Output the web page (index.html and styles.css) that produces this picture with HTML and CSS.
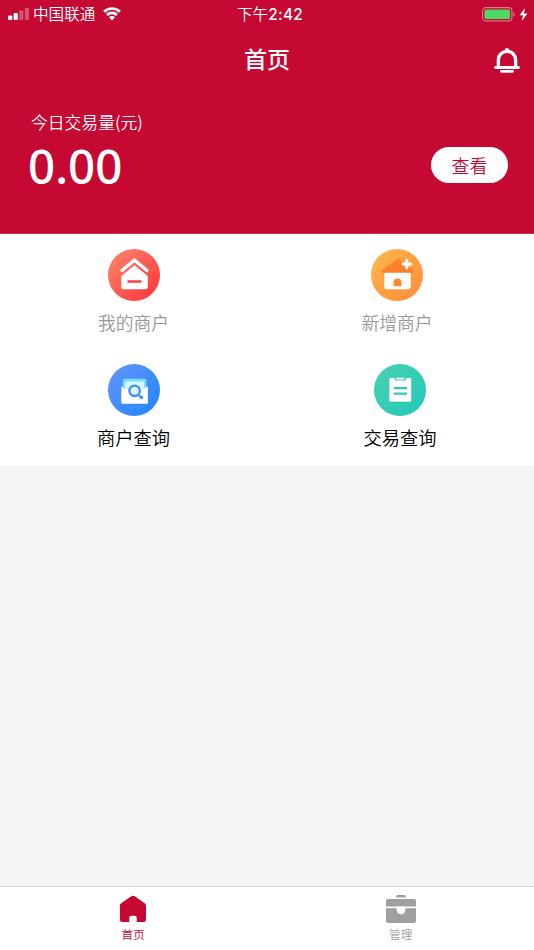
FILE: index.html
```html
<!DOCTYPE html>
<html lang="zh-CN">
<head>
    <meta charset="UTF-8">
    <meta name="viewport" content="width=device-width, initial-scale=1.0">
    <title>首页</title>
    <link rel="stylesheet" href="styles.css">
</head>
<body>

<div class="page">
    <header class="header">
        <div class="status-bar">
            <div class="status-left">
                <svg class="signal" width="21" height="12" viewBox="0 0 21 12" fill="#fff">
                    <rect x="0" y="7.5" width="4.2" height="4.5" rx="1"/>
                    <rect x="5.6" y="5" width="4.2" height="7" rx="1"/>
                    <rect x="11.2" y="2.5" width="4.2" height="9.5" rx="1" opacity=".3"/>
                    <rect x="16.8" y="0" width="4.2" height="12" rx="1" opacity=".3"/>
                </svg>
                <span class="carrier">中国联通</span>
                <svg class="wifi" width="18" height="14" viewBox="0 0 18 14">
                    <path d="M1.1 4.7a11.3 11.3 0 0 1 15.8 0M4 8a7.1 7.1 0 0 1 10 0" fill="none" stroke="#fff" stroke-width="2.7"/>
                    <path d="M9 13.5L5.9 10.3a4.4 4.4 0 0 1 6.2 0z" fill="#fff"/>
                </svg>
            </div>
            <div class="status-time">下午<span class="clock">2:42</span></div>
            <div class="status-right">
                <svg width="34" height="15" viewBox="0 0 34 15">
                    <rect x=".6" y=".6" width="29.3" height="13.3" rx="3.4" fill="none" stroke="#fff" stroke-opacity=".45" stroke-width="1.1"/>
                    <rect x="2.5" y="2.4" width="25.5" height="9.7" rx="1.6" fill="#4cd964"/>
                    <path d="M31.4 4.9q2.6 2.3 0 4.8z" fill="#fff" opacity=".5"/>
                </svg>
                <svg class="bolt" width="9" height="13" viewBox="0 0 9 13">
                    <path d="M6 0L.5 7.3H4L2.8 13 8.5 5.4H5z" fill="#fff"/>
                </svg>
            </div>
        </div>

        <div class="nav-bar">
            <h1 class="nav-title">首页</h1>
            <svg class="bell" width="26" height="26" viewBox="0 0 26 26">
                <circle cx="13" cy="2.2" r="2.2" fill="#fff"/>
                <path d="M4.4 19.5V11.6a8.6 8.3 0 0 1 17.2 0v7.9" fill="none" stroke="#fff" stroke-width="3.3"/>
                <path d="M1.5 19.5h23M7.5 23.3h11" stroke="#fff" stroke-width="2.8" stroke-linecap="round"/>
            </svg>
        </div>

        <div class="summary">
            <div>
                <div class="summary-label">今日交易量(元)</div>
                <div class="summary-amount">0.00</div>
            </div>
            <button class="view-btn">查看</button>
        </div>
    </header>

    <main class="menu">
        <div class="menu-item muted">
            <svg width="52" height="52" viewBox="0 0 52 52">
                <defs>
                    <linearGradient id="red" x1="0" y1="0" x2="1" y2="1">
                        <stop offset="0" stop-color="#ff8a6c"/>
                        <stop offset="1" stop-color="#fd3038"/>
                    </linearGradient>
                </defs>
                <circle cx="26" cy="26" r="26" fill="url(#red)"/>
                <path d="M26.5 16.2L39.8 27v10.8q0 2.5-2.5 2.5H15.8q-2.5 0-2.5-2.5V27z" fill="#fff"/>
                <path d="M13 22.2L26.5 11.3 40 22.2" fill="none" stroke="#fff" stroke-width="3.4"/>
                <path d="M19.5 32.5h14" stroke="#f6474b" stroke-width="2.6"/>
            </svg>
            <span>我的商户</span>
        </div>
        <div class="menu-item muted shifted">
            <svg width="52" height="52" viewBox="0 0 52 52">
                <defs>
                    <linearGradient id="orange" x1="0" y1="0" x2="1" y2="1">
                        <stop offset="0" stop-color="#ffb84d"/>
                        <stop offset="1" stop-color="#ff8b36"/>
                    </linearGradient>
                </defs>
                <circle cx="26" cy="26" r="26" fill="url(#orange)"/>
                <path d="M13.3 22h26.4v15.8q0 2.5-2.5 2.5H15.8q-2.5 0-2.5-2.5z" fill="#fff"/>
                <path d="M26.3 10.3q1-.6 2 .2L42.6 22q.9 1.8-.9 1.8H11.3q-1.9 0-.9-1.8z" fill="#ff7f2c"/>
                <path d="M22.6 37.3v-4.1a3.9 3.7 0 0 1 7.8 0v4.1z" fill="#ff8a32"/>
                <path d="M35.8 11.4v7.4M32.1 15.1h7.4" stroke="#fff" stroke-width="3.1" stroke-linecap="round"/>
            </svg>
            <span>新增商户</span>
        </div>
        <div class="menu-item">
            <svg width="52" height="52" viewBox="0 0 52 52">
                <defs>
                    <linearGradient id="blue" x1="0" y1="0" x2="1" y2="1">
                        <stop offset="0" stop-color="#6595fa"/>
                        <stop offset="1" stop-color="#1f86ff"/>
                    </linearGradient>
                </defs>
                <circle cx="26" cy="26" r="26" fill="url(#blue)"/>
                <path d="M14.8 26V16.5q0-1.8 1.8-1.8h20q1.8 0 1.8 1.8V26z" fill="#7fdcf8"/>
                <path d="M17.3 32V19q0-1.6 1.6-1.6h15.6q1.6 0 1.6 1.6v13z" fill="#d3fcf4"/>
                <path d="M13.3 22.2l7 4.4h12.6l7-4.4v16.6q0 1-1 1H14.3q-1 0-1-1z" fill="#fff"/>
                <circle cx="26.6" cy="26.8" r="5.2" fill="#d8f7fb" stroke="#478cf8" stroke-width="2.4"/>
                <circle cx="31.5" cy="31.8" r="1.2" fill="#478cf8"/>
                <circle cx="33.4" cy="33.4" r="1.8" fill="#478cf8"/>
            </svg>
            <span>商户查询</span>
        </div>
        <div class="menu-item last">
            <svg width="52" height="52" viewBox="0 0 52 52">
                <defs>
                    <linearGradient id="green" x1="0" y1="0" x2="1" y2="1">
                        <stop offset="0" stop-color="#4bd1b1"/>
                        <stop offset="1" stop-color="#20c9b7"/>
                    </linearGradient>
                </defs>
                <circle cx="26" cy="26" r="26" fill="url(#green)"/>
                <rect x="15.3" y="15" width="22.4" height="24" rx="1" fill="#20ad9c" opacity=".45"/>
                <rect x="15.3" y="14" width="22" height="23.8" rx="1" fill="#fff"/>
                <path d="M20.7 13.5v3h11.2v-3z" fill="#37cdb4"/>
                <path d="M22.2 13.7h8.2v1.8h-8.2z" fill="#fff"/>
                <path d="M20 24.2h13M20 29.6h13" stroke="#2fc9b3" stroke-width="2.3"/>
            </svg>
            <span>交易查询</span>
        </div>
    </main>

    <nav class="tab-bar">
        <a class="tab active">
            <svg width="28" height="30" viewBox="0 0 28 30">
                <path d="M12.3 1.2q1.7-1 3.4 0l10 7q1.3.9 1.3 2.6v13.7q0 2.5-2.5 2.5h-6.8v-4.2q0-2-2-2h-3.4q-2 0-2 2V27H3.4Q.9 27 .9 24.5V10.8q0-1.7 1.3-2.6z" fill="currentColor"/>
            </svg>
            <span>首页</span>
        </a>
        <a class="tab">
            <svg width="30" height="30" viewBox="0 0 30 30" fill="currentColor">
                <path d="M10.3 2.6V1.3Q10.3 0 11.6 0h6.8q1.3 0 1.3 1.3v1.3z"/>
                <path d="M0 11.6V6q0-2 2-2h26q2 0 2 2v5.6z"/>
                <path d="M0 13.2h10.3q.7 6.2 4.7 6.2t4.7-6.2H30v12.6q0 2.2-2.2 2.2H2.2Q0 28 0 25.8z"/>
                <path d="M11.2 11.6h7.6v3.3a3.8 4 0 0 1-7.6 0z" fill="#fff"/>
            </svg>
            <span>管理</span>
        </a>
    </nav>
</div>

</body>
</html>
```

FILE: styles.css
```css
* {
    box-sizing: border-box;
}

body {
    margin: 0;
    font-family: "Noto Sans CJK SC", sans-serif;
    background-color: #f5f5f5;
}

.page {
    display: flex;
    flex-direction: column;
    height: 950px;
}

svg {
    display: block;
    flex-shrink: 0;
}

.header {
    height: 234px;
    background-color: #c50932;
    border-bottom: 1px solid #cd3155;
    color: #fff;
}

.status-bar {
    display: grid;
    grid-template-columns: 1fr auto 1fr;
    align-items: center;
    height: 26px;
    padding: 0 6px 0 8px;
    font-size: 15.6px;
    font-weight: 350;
    line-height: 26px;
}

.status-left,
.status-right {
    display: flex;
    align-items: center;
}

.status-right {
    justify-content: flex-end;
    gap: 3px;
}

.carrier {
    margin: 0 8px 0 4px;
    line-height: 24px;
    padding-bottom: 2px;
}

.status-time {
    padding-left: 4px;
}

.clock {
    font-family: Inter, sans-serif;
    font-size: 15.4px;
    font-weight: 500;
    letter-spacing: 0.3px;
}

.nav-bar {
    display: grid;
    grid-template-columns: 1fr auto 1fr;
    align-items: center;
    height: 64px;
    padding: 0 14px;
}

.nav-title {
    grid-column: 2;
    margin: 0;
    font-size: 23px;
    font-weight: 500;
    line-height: 64px;
}

.bell {
    justify-self: end;
    margin-top: 5px;
}

.summary {
    display: flex;
    justify-content: space-between;
    padding: 20px 26px 0 28px;
}

.summary-label {
    padding-left: 3px;
    font-size: 16.8px;
    font-weight: 350;
    line-height: 25px;
}

.summary-amount {
    font-family: "Noto Sans", sans-serif;
    font-size: 47.5px;
    font-weight: 500;
    line-height: 62px;
}

.view-btn {
    width: 77px;
    height: 36px;
    margin-top: 37px;
    padding: 0;
    border: none;
    border-radius: 18px;
    background-color: #fff;
    color: #c50932;
    font-family: inherit;
    font-size: 18px;
    font-weight: 350;
    line-height: 36px;
}

.menu {
    display: grid;
    grid-template-columns: 1fr 1fr;
    grid-template-rows: 115px 117px;
    height: 232px;
    background-color: #fff;
}

.menu-item {
    display: flex;
    flex-direction: column;
    align-items: center;
    padding-top: 15px;
    font-size: 18.3px;
    font-weight: 350;
    line-height: 28px;
}

.menu-item span {
    margin-top: 7px;
}

.menu-item.muted {
    color: #999;
    font-size: 17.8px;
}

.menu-item.shifted {
    padding-right: 7px;
}

.menu-item.last {
    padding-right: 1px;
}

.tab-bar {
    display: flex;
    height: 64px;
    margin-top: auto;
    border-top: 1px solid #d2d2d2;
    background-color: #fff;
}

.tab {
    display: flex;
    flex: 1;
    flex-direction: column;
    align-items: center;
    padding-top: 8px;
    color: #9f9f9f;
    font-size: 11.7px;
    font-weight: 350;
    line-height: 18px;
}

.tab.active {
    padding-right: 1px;
    color: #c50932;
}
```
